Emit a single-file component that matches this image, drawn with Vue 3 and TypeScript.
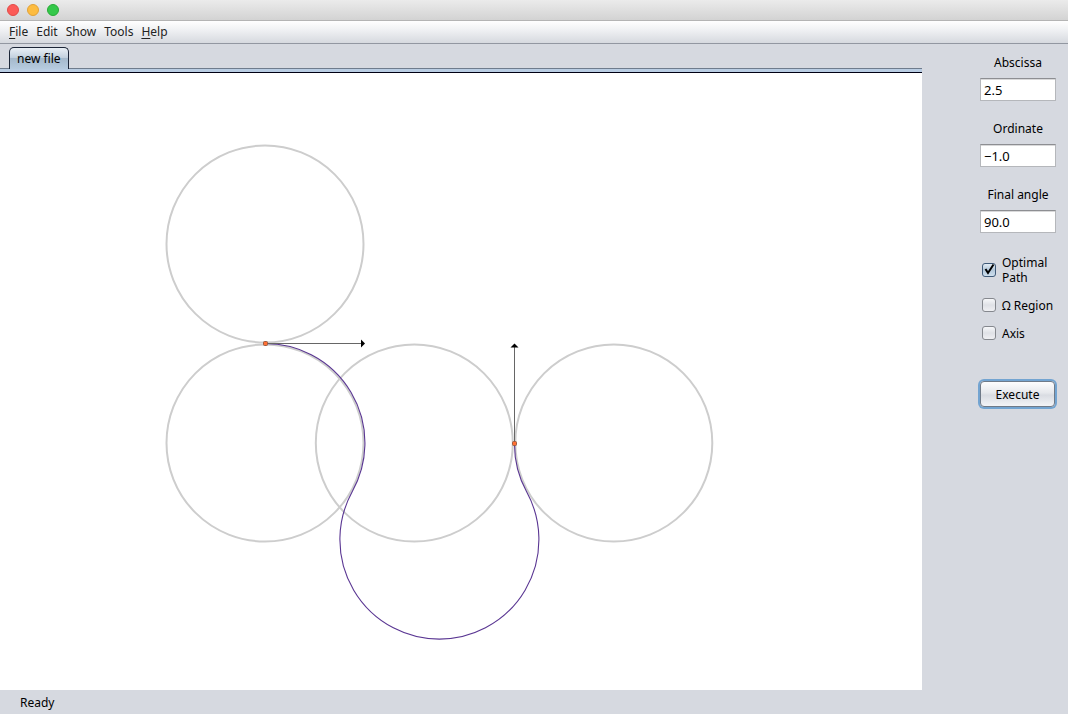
<script setup lang="ts">
import { ref } from 'vue'

interface Menu { key: string; rest: string; mnemonic: boolean }
interface Field { id: string; label: string; value: string }
interface Option { id: string; label: string; on: boolean }
interface Circle { cx: number; cy: number }

const menus: Menu[] = [
  { key: 'F', rest: 'ile', mnemonic: true },
  { key: 'E', rest: 'dit', mnemonic: false },
  { key: 'S', rest: 'how', mnemonic: false },
  { key: 'T', rest: 'ools', mnemonic: false },
  { key: 'H', rest: 'elp', mnemonic: true },
]

const fields = ref<Field[]>([
  { id: 'abscissa', label: 'Abscissa', value: '2.5' },
  { id: 'ordinate', label: 'Ordinate', value: '−1.0' },
  { id: 'angle', label: 'Final angle', value: '90.0' },
])

const options = ref<Option[]>([
  { id: 'optimal', label: 'Optimal Path', on: true },
  { id: 'region', label: 'Ω Region', on: false },
  { id: 'axis', label: 'Axis', on: false },
])

const radius = 98.5
const circles: Circle[] = [
  { cx: 265, cy: 171 },
  { cx: 265, cy: 370 },
  { cx: 414.3, cy: 370 },
  { cx: 613.8, cy: 370 },
]
</script>

<template>
  <div class="window">
    <header class="titlebar">
      <button class="light close" type="button" aria-label="Close"></button>
      <button class="light minimize" type="button" aria-label="Minimize"></button>
      <button class="light zoom" type="button" aria-label="Zoom"></button>
    </header>

    <nav class="menubar">
      <button v-for="m in menus" :key="m.key" type="button" class="menu"><span :class="{ mnemonic: m.mnemonic }">{{ m.key }}</span>{{ m.rest }}</button>
    </nav>

    <div class="body">
      <main class="workspace">
        <div class="tabs" role="tablist">
          <button class="tab" type="button" role="tab" aria-selected="true">new file</button>
        </div>
        <div class="tabline"></div>
        <div class="canvas">
          <svg width="100%" height="100%" role="img" aria-label="Path between two poses">
            <circle
              v-for="(c, i) in circles" :key="i" :cx="c.cx" :cy="c.cy" :r="radius"
              fill="none" stroke="#cdcdcd" stroke-width="2"
            />
            <path
              d="M265 270.5 A99.5 99.5 0 0 1 352.3 418.5 A99.5 99.5 0 1 0 526.5 418.5 A99.5 99.5 0 0 1 514.5 370.5"
              fill="none" stroke="#4b2489" stroke-opacity="0.92" stroke-width="1.1"
            />
            <path d="M265 270.5 H362 M514.5 370 V273" fill="none" stroke="#666" />
            <path d="M361 266.5 L365 270.5 L361 274.5 Z M510.5 274.5 L514.5 270.5 L518.5 274.5 Z" fill="#000" />
            <rect x="263.5" y="268.5" width="4" height="4" rx="1" fill="#ff7033" stroke="#9a5a40" />
            <rect x="512.5" y="368.5" width="4" height="4" rx="1" fill="#ff7033" stroke="#9a5a40" />
          </svg>
        </div>
      </main>

      <aside class="panel">
        <div v-for="f in fields" :key="f.id" class="field">
          <label :for="f.id">{{ f.label }}</label>
          <input :id="f.id" v-model="f.value" type="text" />
        </div>
        <div class="options">
          <label v-for="o in options" :key="o.id" class="option">
            <span class="box">
              <input v-model="o.on" type="checkbox" />
              <svg v-if="o.on" class="tick" viewBox="0 0 14 14" aria-hidden="true">
                <path d="M3.5 6 L6 10 L11.5 1.5" fill="none" stroke="#000" stroke-width="2" />
              </svg>
            </span>
            <span>{{ o.label }}</span>
          </label>
        </div>
        <button class="execute" type="button">Execute</button>
      </aside>
    </div>

    <footer class="status">Ready</footer>
  </div>
</template>

<style>
body {
  margin: 0;
}
</style>

<style scoped>
.window {
  display: flex;
  flex-direction: column;
  height: 100vh;
  background: #d6d9e0;
  color: #000;
  font: 12px/15px "Noto Sans", "Open Sans", sans-serif;
}
button,
input {
  box-sizing: border-box;
  margin: 0;
  font: inherit;
  color: inherit;
}
.titlebar {
  display: flex;
  align-items: center;
  gap: 8px;
  box-sizing: border-box;
  height: 21px;
  padding: 0 7px;
  background: linear-gradient(#ebebeb, #d3d3d3);
  border-bottom: 1px solid #b4b4b4;
}
.light {
  width: 12px;
  height: 12px;
  padding: 0;
  border: 1px solid;
  border-radius: 50%;
}
.close {
  background: #fc5b57;
  border-color: #e24b47;
}
.minimize {
  background: #fdbc40;
  border-color: #e2a237;
}
.zoom {
  background: #34c84a;
  border-color: #27ab36;
}
.menubar {
  display: flex;
  align-items: center;
  gap: 8px;
  box-sizing: border-box;
  height: 23px;
  padding: 0 9px 2px;
  background: linear-gradient(#fff, #f2f3f5 35%, #d6d9df);
  border-bottom: 1px solid #9297a1;
}
.menu {
  padding: 0;
  border: 0;
  background: none;
  color: #232323;
}
.mnemonic {
  text-decoration: underline;
  text-underline-offset: 2px;
}
.body {
  display: flex;
  flex: 1;
  min-height: 0;
}
.workspace {
  display: flex;
  flex: 1;
  flex-direction: column;
  min-width: 0;
}
.tabs {
  display: flex;
  padding: 3px 9px 0;
}
.tab {
  height: 22px;
  padding: 0 7px;
  border: 1px solid #1c2638;
  border-bottom: 0;
  border-radius: 5px 5px 0 0;
  background: linear-gradient(#e9eff5, #c3d1df 45%, #a5b9cc 50%, #b6cbdf);
  margin-bottom: -1px;
  z-index: 1;
}
.tabline {
  box-sizing: border-box;
  height: 5px;
  background: #b9cde3;
  border-top: 1px solid #6f7c8d;
  border-bottom: 1px solid #000014;
}
.canvas {
  flex: 1;
  min-height: 0;
  overflow: hidden;
  background: #fff;
}
.canvas svg {
  display: block;
}
.panel {
  display: flex;
  flex-direction: column;
  width: 76px;
  padding: 11px 12px 0 58px;
}
.field {
  display: flex;
  flex-direction: column;
  gap: 8px;
  margin-bottom: 20px;
  text-align: center;
}
.field input {
  width: 100%;
  height: 23px;
  padding: 0 3px;
  border: 1px solid #b5b7bb;
  border-top-color: #8d8e92;
  background: #fff;
  box-shadow: inset 0 1px #d9d9da;
  font-size: 13px;
  outline: 0;
}
.options {
  display: flex;
  flex-direction: column;
  gap: 12px;
  margin-top: 2px;
}
.option {
  display: flex;
  align-items: center;
  gap: 6px;
  min-height: 16px;
  padding-left: 2px;
}
.box {
  position: relative;
  flex: none;
  width: 14px;
  height: 14px;
}
.box input {
  display: block;
  width: 14px;
  height: 14px;
  appearance: none;
  border: 1px solid #85888e;
  border-radius: 3px;
  background: linear-gradient(#f7f8fa, #dfe1e6 50%, #eff0f3);
}
.box input:checked {
  border-color: #3f5a78;
  background: linear-gradient(#e4edf5, #b3c7d9 50%, #cfe0ef);
}
.tick {
  position: absolute;
  inset: 0;
  pointer-events: none;
}
.execute {
  height: 26px;
  margin: 40px 1px 0 0;
  padding: 0;
  border: 1px solid #6f7a88;
  border-radius: 4px;
  background: linear-gradient(#fdfdfe, #e6e8ec 45%, #d9dce2 55%, #f3f4f7);
  box-shadow: 0 0 0 2px #73a4d1;
}
.status {
  box-sizing: border-box;
  height: 24px;
  padding: 5px 20px;
}
</style>
